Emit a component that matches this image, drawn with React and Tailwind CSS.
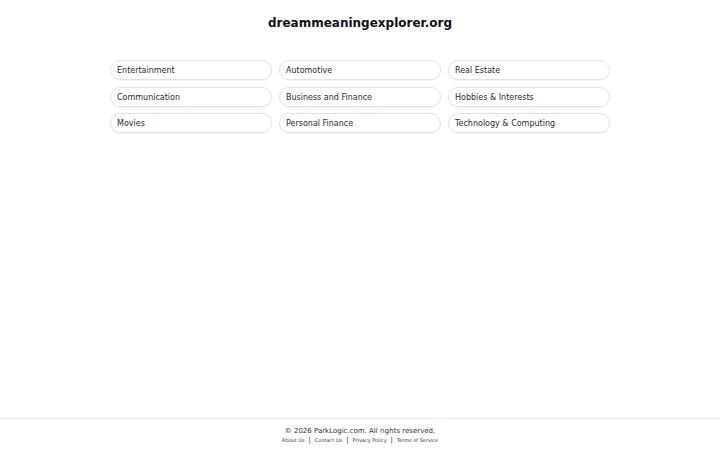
import React from 'react';

const categories = [
  'Entertainment',
  'Automotive',
  'Real Estate',
  'Communication',
  'Business and Finance',
  'Hobbies & Interests',
  'Movies',
  'Personal Finance',
  'Technology & Computing',
];

const links = ['About Us', 'Contact Us', 'Privacy Policy', 'Terms of Service'];

export default function App() {
  return (
    <div
      className="min-h-screen flex flex-col bg-white text-[#222]"
      style={{ fontFamily: '"DejaVu Sans", sans-serif' }}
    >
      <main className="flex-grow">
        <h1 className="text-center text-[12px] font-bold leading-[16px] pt-[15px] text-[#111]">
          dreammeaningexplorer.org
        </h1>
        <div className="w-[500px] mx-auto mt-[29px] grid grid-cols-3 gap-x-[7px] gap-y-[6.5px]">
          {categories.map((c) => (
            <a
              key={c}
              href="#"
              className="block h-[20px] leading-[19px] px-[6px] text-[8px] text-[#2a2a2a] border border-[#e2e2e2] rounded-full shadow-[0_1px_1px_rgba(0,0,0,0.04)]"
            >
              {c}
            </a>
          ))}
        </div>
      </main>

      <footer className="h-[32px] border-t border-[#eeeeee] flex flex-col items-center pt-[8px]">
        <p className="text-[7px] leading-[9px] text-[#333]">
          © 2026 ParkLogic.com. All rights reserved.
        </p>
        <div className="flex items-center text-[5px] leading-[8px] text-[#333]">
          {links.map((l, i) => (
            <React.Fragment key={l}>
              {i > 0 && <span className="mx-[4px] text-[7px] leading-[8px]">|</span>}
              <a href="#">{l}</a>
            </React.Fragment>
          ))}
        </div>
      </footer>
    </div>
  );
}
